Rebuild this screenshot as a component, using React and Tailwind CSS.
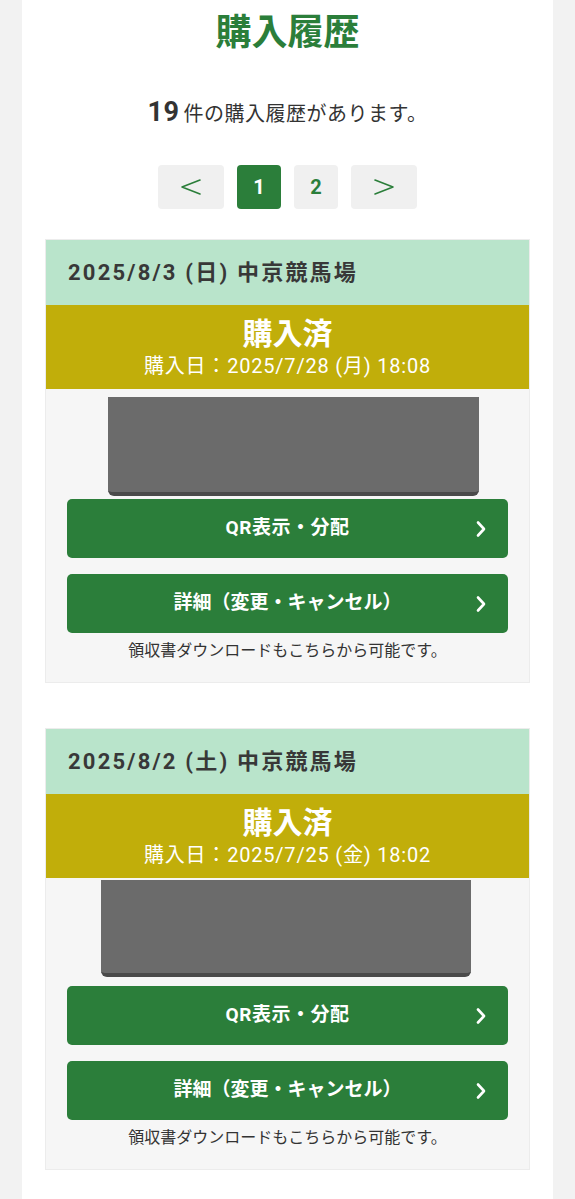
import React from "react";

const font = { fontFamily: "Roboto, 'Noto Sans CJK JP', sans-serif" };

const purchases = [
  {
    race: "2025/8/3 (日) 中京競馬場",
    bought: "購入日：2025/7/28 (月) 18:08",
    img: "ml-[62px] mr-[50px] mt-[8px] h-[99px]",
    gap: "pt-[3px]",
  },
  {
    race: "2025/8/2 (土) 中京競馬場",
    bought: "購入日：2025/7/25 (金) 18:02",
    img: "ml-[55px] mr-[58px] mt-[2px] h-[97px]",
    gap: "pt-[9px]",
  },
];

function Chevron() {
  return (
    <svg width="16" height="18" viewBox="0 0 16 18" fill="none" stroke="currentColor" strokeWidth="2.6" strokeLinecap="round" strokeLinejoin="round">
      <path d="M5 2.5 L11 9 L5 15.5" />
    </svg>
  );
}

function Angle({ dir }) {
  return (
    <svg width="24" height="18" viewBox="0 0 24 18" fill="none" stroke="currentColor" strokeWidth="1.6" strokeLinecap="round" strokeLinejoin="round">
      {dir === "left" ? <path d="M21 2 L3 9 L21 16" /> : <path d="M3 2 L21 9 L3 16" />}
    </svg>
  );
}

function PurchaseCard({ item }) {
  return (
    <div className="border border-[#ececec] bg-[#f6f6f6]">
      <div className="flex h-[65px] items-center bg-[#b9e4cb] px-[22px] text-[22px] font-bold tracking-[2.2px] text-[#383838]">
        {item.race}
      </div>
      <div className="flex h-[84px] flex-col items-center justify-center bg-[#c1ae0a] text-white">
        <div className="text-[30px] font-bold leading-[38px]">購入済</div>
        <div className="text-[20px] leading-[26px] tracking-[0.8px]">{item.bought}</div>
      </div>
      <div className={`${item.img} rounded-b-[6px] border-b-[4px] border-[#4a4a4a] bg-[#6b6b6b]`}></div>
      <div className={`flex flex-col gap-[16px] px-[21px] ${item.gap}`}>
        <button className="relative flex h-[59px] items-center justify-center rounded-[5px] bg-[#2b7e3a] text-[19px] font-bold tracking-[0.5px] text-white">
          QR表示・分配
          <span className="absolute right-[19px]"><Chevron /></span>
        </button>
        <button className="relative flex h-[59px] items-center justify-center rounded-[5px] bg-[#2b7e3a] text-[19px] font-bold text-white">
          詳細（変更・キャンセル）
          <span className="absolute right-[19px]"><Chevron /></span>
        </button>
      </div>
      <p className="pb-[19px] pt-[6px] text-center text-[16px] text-[#333]">領収書ダウンロードもこちらから可能です。</p>
    </div>
  );
}

export default function App() {
  return (
    <div className="min-h-screen bg-[#f2f2f2]" style={font}>
      <div className="mx-[22px] min-h-[1199px] bg-white px-[23px] pb-[30px]">
        <h1 className="pt-[10px] text-center text-[36px] font-bold leading-[46px] text-[#2b7e3a]">購入履歴</h1>
        <p className="mt-[38px] text-center text-[20px] leading-[36px] tracking-[0.5px] text-[#333]">
          <span className="mr-[4px] text-[27px] font-bold">19</span>件の購入履歴があります。
        </p>
        <div className="mt-[33px] flex justify-center gap-[13px]">
          <button className="flex h-[44px] w-[66px] items-center justify-center rounded-[4px] bg-[#f0f0f0] text-[#2b7e3a]"><Angle dir="left" /></button>
          <button className="flex h-[44px] w-[44px] items-center justify-center rounded-[4px] bg-[#2b7e3a] text-[20px] font-bold text-white">1</button>
          <button className="flex h-[44px] w-[44px] items-center justify-center rounded-[4px] bg-[#f0f0f0] text-[20px] font-bold text-[#2b7e3a]">2</button>
          <button className="flex h-[44px] w-[66px] items-center justify-center rounded-[4px] bg-[#f0f0f0] text-[#2b7e3a]"><Angle dir="right" /></button>
        </div>
        <div className="mt-[30px] flex flex-col gap-[45px]">
          {purchases.map((p, i) => (
            <PurchaseCard key={i} item={p} />
          ))}
        </div>
      </div>
    </div>
  );
}
